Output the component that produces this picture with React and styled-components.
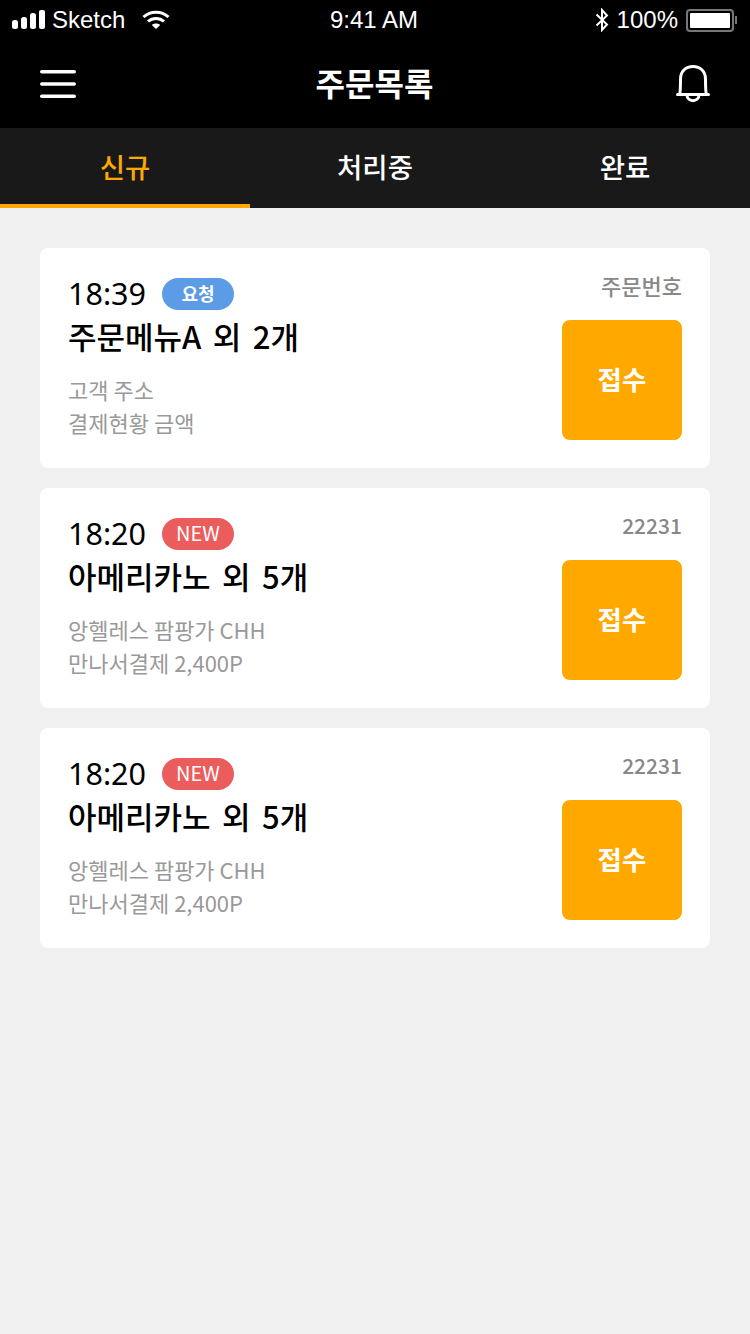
import React from "react";
import styled, { createGlobalStyle } from "styled-components";

const GlobalStyle = createGlobalStyle`
  html, body {
    margin: 0;
    padding: 0;
    background: #f0f0f0;
  }
  * { box-sizing: border-box; }
`;

const KR = `"Noto Sans CJK KR", "Noto Sans", sans-serif`;

const orders = [
  { id: 1, time: "18:39", badge: "요청", kind: "req", title: "주문메뉴A 외 2개", line1: "고객 주소", line2: "결제현황 금액", no: "주문번호" },
  { id: 2, time: "18:20", badge: "NEW", kind: "new", title: "아메리카노 외 5개", line1: "앙헬레스 팜팡가 CHH", line2: "만나서결제 2,400P", no: "22231", numeric: true },
  { id: 3, time: "18:20", badge: "NEW", kind: "new", title: "아메리카노 외 5개", line1: "앙헬레스 팜팡가 CHH", line2: "만나서결제 2,400P", no: "22231", numeric: true },
];

const tabs = ["신규", "처리중", "완료"];

const SignalIcon = () => (
  <svg width="34" height="20" viewBox="0 0 34 20" fill="#fff">
    <rect x="0" y="10" width="6" height="9" rx="2.5" />
    <rect x="9" y="7" width="6" height="12" rx="2.5" />
    <rect x="18" y="3" width="6" height="16" rx="2.5" />
    <rect x="27" y="0" width="6" height="19" rx="2" />
  </svg>
);

const WifiIcon = () => (
  <svg width="28" height="20" viewBox="0 0 28 20" fill="none" stroke="#fff" strokeWidth="3">
    <path d="M1.5 7 C8.5 0.5 19.5 0.5 26.5 7" />
    <path d="M6 11.5 C10.5 7.5 17.5 7.5 22 11.5" />
    <path d="M14 19 L9.8 15 C12 13 16 13 18.2 15 Z" fill="#fff" stroke="none" />
  </svg>
);

const BluetoothIcon = () => (
  <svg width="14" height="24" viewBox="0 0 14 24" fill="none" stroke="#fff" strokeWidth="2">
    <path d="M1.5 6.5 L12 16.5 L7 22 L7 2 L12 7.5 L1.5 17.5" />
  </svg>
);

const MenuIcon = () => (
  <svg width="36" height="28" viewBox="0 0 36 28" fill="#fff">
    <rect x="0" y="0" width="36" height="3.6" rx="1.8" />
    <rect x="0" y="12.2" width="36" height="3.6" rx="1.8" />
    <rect x="0" y="24.4" width="36" height="3.6" rx="1.8" />
  </svg>
);

const BellIcon = () => (
  <svg width="34" height="38" viewBox="0 0 34 38" fill="none" stroke="#fff" strokeWidth="3" strokeLinecap="round">
    <path d="M1.5 29.5 H32.5" />
    <path d="M3.5 29.5 C4.5 27.5 4.5 25 4.5 14 C4.5 6 10 1.5 17 1.5 C24 1.5 29.5 6 29.5 14 C29.5 25 29.5 27.5 30.5 29.5" />
    <path d="M11 30 C11 37.5 23 37.5 23 30" />
  </svg>
);

const App = () => (
  <>
    <GlobalStyle />
    <Page>
      <StatusBar>
        <StatusLeft>
          <SignalIcon />
          <span>Sketch</span>
          <WifiSlot><WifiIcon /></WifiSlot>
        </StatusLeft>
        <StatusTime>9:41 AM</StatusTime>
        <StatusRight>
          <BluetoothIcon />
          <span>100%</span>
          <Battery><BatteryFill /></Battery>
          <BatteryCap />
        </StatusRight>
      </StatusBar>
      <NavBar>
        <MenuIcon />
        <NavTitle>주문목록</NavTitle>
        <BellIcon />
      </NavBar>
      <TabBar>
        {tabs.map((t, i) => (
          <Tab key={t} $active={i === 0}>{t}</Tab>
        ))}
      </TabBar>
      <List>
        {orders.map((o) => (
          <Card key={o.id}>
            <Info>
              <TimeRow>
                <Time>{o.time}</Time>
                <Badge $kind={o.kind}>{o.badge}</Badge>
              </TimeRow>
              <Title>{o.title}</Title>
              <Sub>{o.line1}</Sub>
              <Sub>{o.line2}</Sub>
            </Info>
            <Side>
              <OrderNo $numeric={o.numeric}>{o.no}</OrderNo>
              <AcceptButton>접수</AcceptButton>
            </Side>
          </Card>
        ))}
      </List>
    </Page>
  </>
);

export default App;

const Page = styled.div`
  width: 750px;
  min-height: 1334px;
  background: #f0f0f0;
  font-family: ${KR};
`;

const StatusBar = styled.div`
  height: 40px;
  background: #000;
  color: #fff;
  display: grid;
  grid-template-columns: 1fr auto 1fr;
  align-items: center;
  padding: 0 12px;
  font-family: "Liberation Sans", Arial, sans-serif;
  font-size: 24px;
`;

const StatusLeft = styled.div`
  display: flex;
  align-items: center;
  gap: 6px;
`;

const WifiSlot = styled.span`
  display: flex;
  margin-left: 11px;
`;

const StatusTime = styled.div`
  text-align: center;
  padding-right: 2px;
`;

const StatusRight = styled.div`
  display: flex;
  align-items: center;
  justify-content: flex-end;
  gap: 8px;
  padding-right: 1px;
`;

const Battery = styled.div`
  width: 48px;
  height: 23px;
  border: 2px solid #777;
  border-radius: 4px;
  padding: 2px;
`;

const BatteryFill = styled.div`
  height: 100%;
  background: #fff;
  border-radius: 1px;
`;

const BatteryCap = styled.div`
  width: 2px;
  height: 8px;
  background: #777;
  margin-left: -7px;
`;

const NavBar = styled.div`
  height: 88px;
  background: #000;
  display: flex;
  align-items: center;
  justify-content: space-between;
  padding: 0 40px;
`;

const NavTitle = styled.div`
  color: #fff;
  font-size: 32px;
  font-weight: 700;
  padding: 0 3px 4px 0;
`;

const TabBar = styled.div`
  height: 80px;
  background: #191919;
  display: grid;
  grid-template-columns: repeat(3, 1fr);
`;

const Tab = styled.div`
  display: flex;
  align-items: center;
  justify-content: center;
  font-size: 27.5px;
  font-weight: 500;
  color: ${(p) => (p.$active ? "#ffa800" : "#fff")};
  border-bottom: 4px solid ${(p) => (p.$active ? "#ffa800" : "transparent")};
`;

const List = styled.div`
  display: flex;
  flex-direction: column;
  gap: 20px;
  padding: 40px 40px 0;
`;

const Card = styled.div`
  height: 220px;
  background: #fff;
  border-radius: 8px;
  padding: 28px;
  display: flex;
  justify-content: space-between;
`;

const Info = styled.div`
  display: flex;
  flex-direction: column;
`;

const TimeRow = styled.div`
  display: flex;
  align-items: center;
  gap: 16px;
  height: 32px;
  margin-top: 2px;
`;

const Time = styled.div`
  font-family: "Noto Sans", sans-serif;
  font-size: 30.5px;
  color: #000;
  line-height: 32px;
  padding-bottom: 2px;
`;

const Badge = styled.div`
  width: 72px;
  height: 32px;
  border-radius: 16px;
  display: flex;
  align-items: center;
  justify-content: center;
  color: #fff;
  font-size: ${(p) => (p.$kind === "new" ? "20px" : "18px")};
  font-weight: ${(p) => (p.$kind === "new" ? 400 : 700)};
  padding-bottom: 3px;
  background: ${(p) => (p.$kind === "new" ? "#eb5c5c" : "#5c9ce6")};
`;

const Title = styled.div`
  font-size: 31px;
  font-weight: 500;
  line-height: 40px;
  word-spacing: 4.5px;
  color: #000;
  margin-top: 6px;
  margin-bottom: 17px;
`;

const Sub = styled.div`
  font-size: 22px;
  line-height: 32.5px;
  color: #999;
`;

const Side = styled.div`
  display: flex;
  flex-direction: column;
  align-items: flex-end;
  justify-content: space-between;
`;

const OrderNo = styled.div`
  font-size: ${(p) => (p.$numeric ? "21px" : "22px")};
  font-weight: 500;
  line-height: 24px;
  margin-top: -3px;
  color: #888;
`;

const AcceptButton = styled.div`
  width: 120px;
  height: 120px;
  border-radius: 8px;
  background: #ffa800;
  color: #fff;
  font-size: 26.5px;
  font-weight: 700;
  padding-bottom: 3px;
  display: flex;
  align-items: center;
  justify-content: center;
`;
